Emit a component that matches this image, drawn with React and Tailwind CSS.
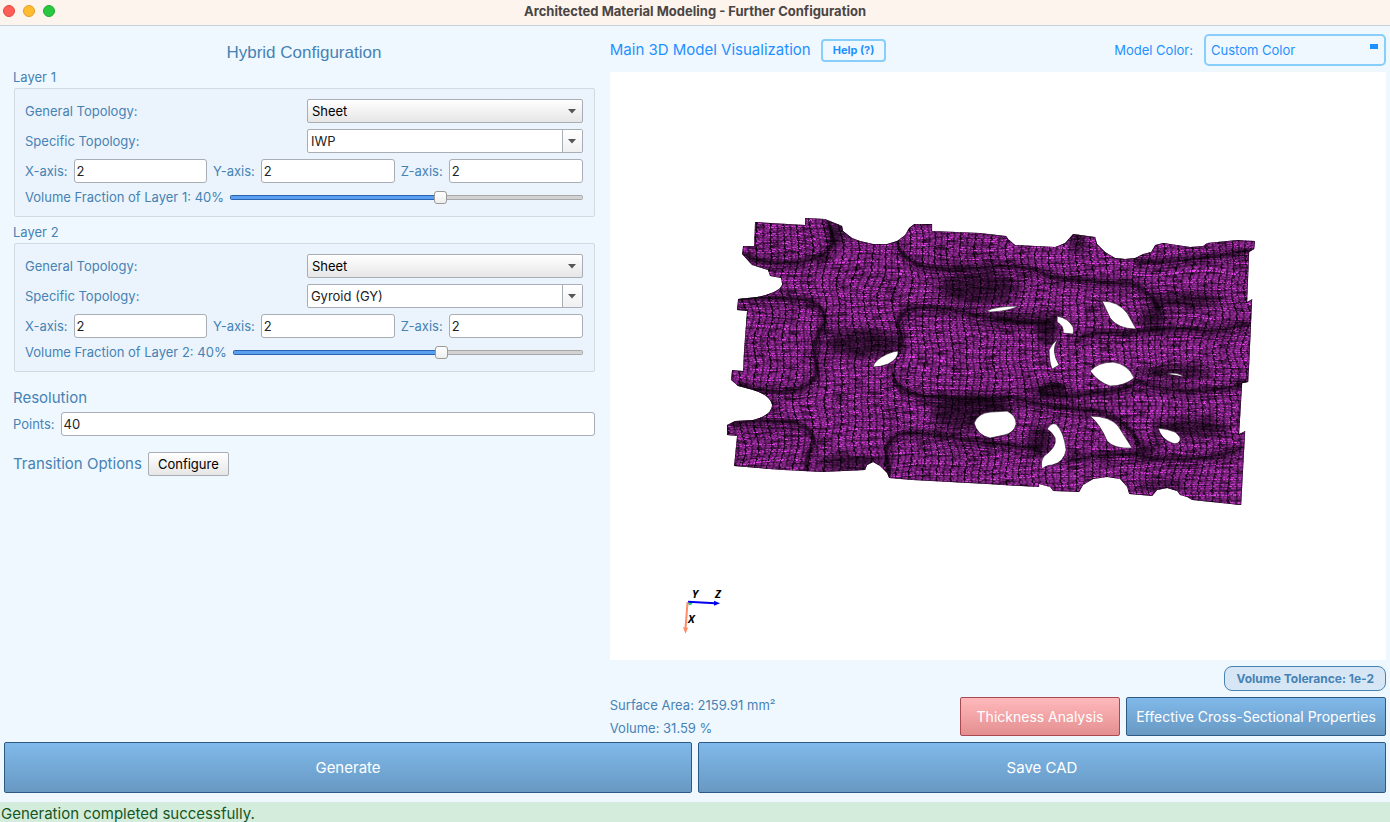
import { useState } from 'react'

const MESH = `M755 222 L805 225 V218 L825 219 L842 226 L843 231 L852 238 L860 241 L873 244 H887
  L897 241 L905 235 L909 228 L914 224 L932 224 V231 L980 233 L1006 236 L1008 239 L1015 245
  L1055 247 L1065 243 L1073 234 L1095 237 L1097 244 L1105 252 L1115 258 L1125 259 L1135 258
  L1143 254 L1151 252 L1155 245 L1163 243 L1190 247 L1203 246 L1207 243 L1237 240 L1255 241
  L1254 249 L1249 252 L1247 302 L1252 299 L1249 365 L1248 382 L1242 383 L1239 434 L1245 431
  L1241 505 L1192 500 L1187 497 L1180 495 L1177 491 L1167 488 L1157 490 L1152 496 L1129 494
  L1127 487 L1120 479 L1107 477 L1093 479 L1083 485 L1079 492 L1053 491 L1050 487 L1039 484
  V487 L987 484 L912 480 L889 478 L887 473 L880 466 L873 462 L867 465 L865 470 L822 472
  L783 470 L734 466 L737 436 L727 435 V425 L735 421 L753 420 Q772 415 772 405 Q770 395 753 390
  L738 386 L731 380 L732 370 L743 371 L744 350 L747 311 L737 310 L738 299 L757 297
  Q781 292 782 284 L781 278 L770 276 L768 270 L752 265 L742 254 L743 246 L754 246 Z`

const HOLES = [
  'M873 367 Q874 360 887 354 Q894 351 898 351 Q899 358 888 364 Q880 367 873 367Z',
  'M986 311 Q996 306 1018 306 Q1010 311 990 312Z',
  'M1057 316 Q1068 318 1073 327 Q1074 331 1073 334 L1063 333 Q1064 326 1057 322Z',
  'M1102 301 Q1118 301 1127 313 L1136 329 Q1118 329 1110 318Z',
  'M1049 350 Q1052 343 1058 339 Q1050 350 1059 365 L1052 369 Q1049 362 1049 350Z',
  'M1090 371 Q1098 362 1113 362 Q1128 364 1134 378 Q1124 386 1110 386 Q1098 382 1090 371Z',
  'M1166 374 Q1177 371 1184 377 Q1175 375 1166 374Z',
  'M974 423 Q978 413 990 412 L1007 411 Q1016 415 1016 424 Q1014 433 1004 435 L990 438 Q977 435 974 423Z',
  'M1047 429 Q1051 422 1056 424 Q1064 432 1066 450 Q1064 462 1052 465 Q1046 465 1042 469 Q1040 461 1044 456 Q1057 447 1055 438 Q1052 432 1047 429Z',
  'M1090 416 Q1110 416 1118 426 L1132 448 Q1114 449 1107 441 Q1100 424 1090 416Z',
  'M1158 428 Q1168 429 1175 432 Q1181 437 1180 440 Q1178 445 1172 443 Q1161 439 1158 428Z',
]

// creases between the lobes of the surface
const CREASES = [
  'M744 254 Q758 264 795 263 Q830 258 832 242 Q832 230 827 221',
  'M738 299 Q770 296 805 300 Q826 305 825 322 Q812 340 815 360 Q822 380 800 389 Q770 395 738 384',
  'M730 424 Q760 419 795 423 Q814 428 814 443 Q806 455 806 470',
  'M897 243 Q902 262 928 267 Q960 270 985 267 Q1020 262 1050 276 Q1090 283 1130 283 Q1150 290 1160 310',
  'M1052 322 Q1040 326 990 318 Q940 305 915 308 Q896 314 898 325 Q905 340 897 355',
  'M893 372 Q893 392 925 396 Q970 402 1010 397 Q1050 408 1100 412 Q1128 420 1140 445',
  'M1040 448 Q990 444 960 439 Q920 430 900 434 Q883 441 887 460 L888 474',
  'M1075 340 Q1090 330 1130 333 Q1170 326 1200 330 Q1225 332 1249 322',
  'M1065 462 Q1100 452 1135 455 Q1170 462 1200 458 Q1225 455 1241 448',
  'M1140 383 Q1170 392 1205 391 Q1230 388 1247 382',
  'M1135 262 Q1180 264 1250 250',
  'M1065 388 Q1045 382 1040 392 Q1060 400 1100 392 Q1130 390 1140 380',
]

const HOLLOWS = [
  [862, 343, 38, 15], [978, 288, 42, 16], [972, 412, 42, 18], [1048, 330, 10, 18],
  [1186, 300, 38, 8], [1190, 428, 38, 10], [1175, 372, 40, 7], [1047, 390, 20, 5],
  [850, 462, 32, 8], [1160, 485, 26, 5], [838, 234, 9, 11], [1153, 318, 14, 11],
  [1078, 240, 7, 16], [1040, 440, 12, 16], [1145, 450, 12, 7], [1020, 318, 30, 5],
]

const RELIEFS = [
  [788, 243, 30, 13], [782, 341, 26, 27], [775, 445, 24, 14], [872, 286, 40, 20],
  [866, 407, 42, 20], [965, 251, 40, 10], [970, 350, 55, 26], [955, 462, 45, 14],
  [1098, 308, 9, 10], [1086, 438, 10, 10],
]

function Model() {
  return (
    <svg
      viewBox="610 72 776 588"
      role="img"
      aria-label="Hybrid lattice model"
      className="block w-full h-full min-h-0"
    >
      <defs>
        <pattern id="wire" width="14" height="8" patternUnits="userSpaceOnUse">
          <rect width="14" height="8" fill="#2a0a2c" />
          <path
            d="M0 .5h3M4 .5h3M8 .5h2M11 .5h2M2 2.5h4M7 2.5h2M10 2.5h3M0 4.5h2M3 4.5h3M8 4.5h4M1 6.5h4M7 6.5h3M11 6.5h2"
            stroke="#f044f4"
            strokeWidth="1"
          />
          <path
            d="M1 1.5h5M7 1.5h6M0 3.5h4M5 3.5h6M1 5.5h3M5 5.5h7M0 7.5h5M7 7.5h6"
            stroke="#7e2482"
            strokeWidth="1"
          />
          <path d="M6.5 0v3M13.5 4v3" stroke="#0a000a" strokeWidth="1" />
        </pattern>
        <filter id="warp" x="0" y="0" width="100%" height="100%" colorInterpolationFilters="sRGB">
          <feTurbulence type="fractalNoise" baseFrequency="0.012 0.03" numOctaves="1" seed="4" />
          <feDisplacementMap in="SourceGraphic" scale="22" xChannelSelector="R" yChannelSelector="G" />
        </filter>
        <filter id="grain" x="0" y="0" width="100%" height="100%">
          <feTurbulence type="fractalNoise" baseFrequency="0.06 0.4" numOctaves="3" seed="9" />
          <feColorMatrix values="0 0 0 0 0  0 0 0 0 0  0 0 0 0 0  4 0 0 0 -1.95" />
        </filter>
        <filter id="soft" x="-20%" y="-20%" width="140%" height="140%">
          <feGaussianBlur stdDeviation="4" />
        </filter>
        <filter id="crease" x="-20%" y="-20%" width="140%" height="140%">
          <feGaussianBlur stdDeviation="1" />
        </filter>
        <clipPath id="body">
          <path d={MESH} />
        </clipPath>
      </defs>
      <g clipPath="url(#body)">
        <rect x="700" y="190" width="580" height="340" fill="url(#wire)" filter="url(#warp)" />
        <rect x="720" y="210" width="540" height="300" filter="url(#grain)" opacity=".55" />
        <g fill="#000" opacity=".6" filter="url(#soft)">
          {HOLLOWS.map(([cx, cy, rx, ry]) => (
            <ellipse key={cx} cx={cx} cy={cy} rx={rx} ry={ry} />
          ))}
        </g>
        <g fill="none" stroke="#000">
          {RELIEFS.map(([cx, cy, rx, ry]) => (
            <g key={cx} strokeWidth=".7" opacity=".5" strokeDasharray="5 1">
              <ellipse cx={cx} cy={cy} rx={rx} ry={ry} />
              <ellipse cx={cx} cy={cy} rx={rx * 0.75} ry={ry * 0.75} />
              <ellipse cx={cx} cy={cy} rx={rx * 0.5} ry={ry * 0.5} />
              <ellipse cx={cx} cy={cy} rx={rx * 0.25} ry={ry * 0.25} />
            </g>
          ))}
          {CREASES.map(d => (
            <g key={d}>
              <path d={d} strokeWidth="8" opacity=".3" filter="url(#soft)" />
              <path d={d} strokeWidth="2.5" opacity=".85" filter="url(#crease)" />
              <g strokeWidth=".8" opacity=".5" strokeDasharray="6 1">
                <path d={d} transform="translate(1 3)" />
                <path d={d} transform="translate(2 6)" />
                <path d={d} transform="translate(-1 -3)" />
                <path d={d} transform="translate(3 9)" />
              </g>
            </g>
          ))}
          <path d={MESH} strokeWidth="1.5" opacity=".6" />
        </g>
      </g>
      <g fill="#fff" stroke="#1c061d" strokeWidth=".6">
        {HOLES.map(d => <path key={d} d={d} />)}
      </g>

      <circle cx="690" cy="603" r="2" fill="#2ecc71" />
      <path d="M688 601.5 L715 603" stroke="#0000f0" strokeWidth="2" />
      <path d="M714 600.5 L720 603 L714 605.5Z" fill="#0000f0" />
      <path d="M687.5 602 L685.5 628" stroke="#ff8c69" strokeWidth="2" />
      <path d="M683 627 L688 627.5 L685.5 633.5Z" fill="#ff8c69" />
      <g fontFamily="Open Sans, sans-serif" fontSize="11" fontWeight="700" fontStyle="italic">
        <text x="692" y="598">Y</text>
        <text x="715" y="598">Z</text>
        <text x="688" y="623">X</text>
      </g>
    </svg>
  )
}

function Arrow() {
  return (
    <svg width="8" height="5" viewBox="0 0 8 5" aria-hidden="true">
      <path d="M0 0h8L4 4.5z" fill="#555" />
    </svg>
  )
}

function Combo({ id, options, editable }) {
  return (
    <div className="relative">
      <select
        id={id}
        className={
          editable
            ? 'block w-full h-6 pl-[3px] appearance-none rounded-xs border border-[#a9adb4] bg-white text-[#222]'
            : 'block w-full h-6 pl-1 appearance-none rounded-xs border border-[#a9adb4] bg-linear-to-b from-white to-[#e6e6e6] text-black'
        }
      >
        {options.map(o => <option key={o}>{o}</option>)}
      </select>
      <span
        className={
          editable
            ? 'absolute inset-y-px right-px w-5 flex items-center justify-center border-l border-[#a9adb4] bg-linear-to-b from-white to-[#f0f0f0] pointer-events-none'
            : 'absolute inset-y-px right-px w-5 flex items-center justify-center pointer-events-none'
        }
      >
        <Arrow />
      </span>
    </div>
  )
}

function TextField({ id, label, value }) {
  return (
    <div className="flex flex-1 min-w-0 items-center gap-1.5">
      <label htmlFor={id} className="shrink-0">{label}</label>
      <input
        id={id}
        defaultValue={value}
        className="w-full min-w-0 h-6 px-[2px] rounded-[3px] border border-[#a9adb4] bg-white text-[#222]"
      />
    </div>
  )
}

function Layer({ n, topology }) {
  const [fraction, setFraction] = useState(40)
  const filled = ((fraction - 10) / 50) * 100

  return (
    <section>
      <h2 className="mb-[3px] leading-4">Layer {n}</h2>
      <div className="ml-px flex flex-col gap-1.5 pt-2.5 pb-[11px] pl-2.5 pr-[11px] rounded-xs border border-[#d0dae3] bg-[#ebf4fc]">
        <div className="grid grid-cols-2 gap-1.5 items-center">
          <label htmlFor={`general-${n}`}>General Topology:</label>
          <Combo id={`general-${n}`} options={['Sheet', 'Skeletal']} />
        </div>
        <div className="grid grid-cols-2 gap-1.5 items-center">
          <label htmlFor={`specific-${n}`}>Specific Topology:</label>
          <Combo id={`specific-${n}`} options={topology} editable />
        </div>
        <div className="flex gap-1.5">
          <TextField id={`x-${n}`} label="X-axis:" value="2" />
          <TextField id={`y-${n}`} label="Y-axis:" value="2" />
          <TextField id={`z-${n}`} label="Z-axis:" value="2" />
        </div>
        <div className="flex h-4 items-center gap-1.5">
          <label htmlFor={`fraction-${n}`} className="shrink-0">
            Volume Fraction of Layer {n}: {fraction}%
          </label>
          <input
            id={`fraction-${n}`}
            type="range"
            min="10"
            max="60"
            value={fraction}
            onChange={e => setFraction(Number(e.target.value))}
            style={{
              backgroundImage: `linear-gradient(to right, #5a9ff0 ${filled}%, #d2d2d2 ${filled}%), linear-gradient(to right, #2a64b0 ${filled}%, #a8a8a8 ${filled}%)`,
            }}
            className="flex-1 min-w-0 h-[5px] appearance-none rounded-xs bg-no-repeat bg-center bg-[length:calc(100%-2px)_3px,100%_100%] [&::-webkit-slider-thumb]:appearance-none [&::-webkit-slider-thumb]:size-[13px] [&::-webkit-slider-thumb]:rounded-[3px] [&::-webkit-slider-thumb]:border [&::-webkit-slider-thumb]:border-[#9a9a9a] [&::-webkit-slider-thumb]:bg-linear-to-b [&::-webkit-slider-thumb]:from-white [&::-webkit-slider-thumb]:to-[#eeeeee]"
          />
        </div>
      </div>
    </section>
  )
}

function App() {
  return (
    <div className="min-h-screen flex flex-col bg-[#f0f8ff] font-['Inter',sans-serif] text-[13px] leading-4 text-[#4682b4]">
      <header className="relative flex h-[26px] items-center justify-center border-b border-[#c3d0da] bg-[#fdf4ee] pb-1">
        <div className="absolute left-[3px] top-[5px] flex gap-2">
          <button aria-label="Close" className="size-3 rounded-full border border-[#e2463f] bg-[#ff5f57]" />
          <button aria-label="Minimize" className="size-3 rounded-full border border-[#e0a028] bg-[#febc2e]" />
          <button aria-label="Zoom" className="size-3 rounded-full border border-[#1fab33] bg-[#28c840]" />
        </div>
        <h1 className="font-bold text-[#4a4543]">Architected Material Modeling - Further Configuration</h1>
      </header>

      <main className="flex-1 grid grid-cols-[17fr_22fr] gap-x-1.5 px-1">
        <div className="flex flex-col px-[9px] pt-[15px]">
          <h2 className="mb-1 text-center font-['Liberation_Sans',sans-serif] text-[17px] leading-6">
            Hybrid Configuration
          </h2>
          <div className="flex flex-col gap-[7px]">
            <Layer n={1} topology={['IWP', 'Gyroid (GY)', 'Diamond']} />
            <Layer n={2} topology={['Gyroid (GY)', 'IWP', 'Diamond']} />
          </div>
          <h2 className="mt-3.5 mb-0.5 text-[15px] leading-6">Resolution</h2>
          <div className="flex">
            <TextField id="points" label="Points:" value="40" />
          </div>
          <div className="mt-4 flex items-center gap-1.5">
            <h2 className="text-[15px] leading-6">Transition Options</h2>
            <button className="h-6 px-[9px] rounded-xs border border-[#a9adb4] bg-linear-to-b from-white to-[#e6e6e6] text-black">
              Configure
            </button>
          </div>
        </div>

        <div className="flex flex-col">
          <div className="flex h-[46px] items-center pt-0.5 text-[#1e90ff]">
            <h2 className="text-[15px] leading-6">Main 3D Model Visualization</h2>
            <button className="ml-2.5 h-[23px] px-2.5 rounded-sm border-2 border-[#87cefa] text-[11px] font-bold">
              Help (?)
            </button>
            <label htmlFor="color" className="ml-auto mr-[11px]">Model Color:</label>
            <div className="relative">
              <select
                id="color"
                className="block w-[182px] h-8 pl-[5px] appearance-none rounded-[5px] border-2 border-[#87cefa] bg-[#f0f8ff]"
              >
                <option>Custom Color</option>
                <option>Steel Blue</option>
              </select>
              <span className="absolute right-2 top-2.5 w-2 h-[5px] bg-[#1e90ff] pointer-events-none" />
            </div>
          </div>

          <div className="flex-1 bg-white">
            <Model />
          </div>

          <div className="flex items-end justify-between pt-1.5">
            <div className="pb-0.5 leading-[23px]">
              <p>Surface Area: 2159.91 mm²</p>
              <p>Volume: 31.59 %</p>
            </div>
            <div className="flex flex-col items-end gap-1.5 pb-1.5">
              <span className="flex h-[25px] items-center px-[11px] rounded-lg border border-[#4682b4] bg-[#d6e6f5] text-xs font-bold">
                Volume Tolerance: 1e-2
              </span>
              <div className="flex gap-1.5 text-white">
                <button className="h-[39px] w-40 rounded-xs border border-[#a84a4f] bg-linear-to-b from-[#ffb9bb] to-[#e48f90] text-sm">
                  Thickness Analysis
                </button>
                <button className="h-[39px] w-[260px] rounded-xs border border-[#2c5a85] bg-linear-to-b from-[#80b9ea] to-[#6899c3] text-sm">
                  Effective Cross-Sectional Properties
                </button>
              </div>
            </div>
          </div>
        </div>
      </main>

      <div className="grid grid-cols-2 gap-1.5 px-1 pb-[9px] text-[15px] text-white">
        <button className="h-[51px] rounded-xs border border-[#2c5a85] bg-linear-to-b from-[#80b9ea] to-[#6899c3]">
          Generate
        </button>
        <button className="h-[51px] rounded-xs border border-[#2c5a85] bg-linear-to-b from-[#80b9ea] to-[#6899c3]">
          Save CAD
        </button>
      </div>

      <footer className="h-5 px-px bg-[#d4ecdb] text-[15px] leading-6 text-[#155724]">
        Generation completed successfully.
      </footer>
    </div>
  )
}

export default App
